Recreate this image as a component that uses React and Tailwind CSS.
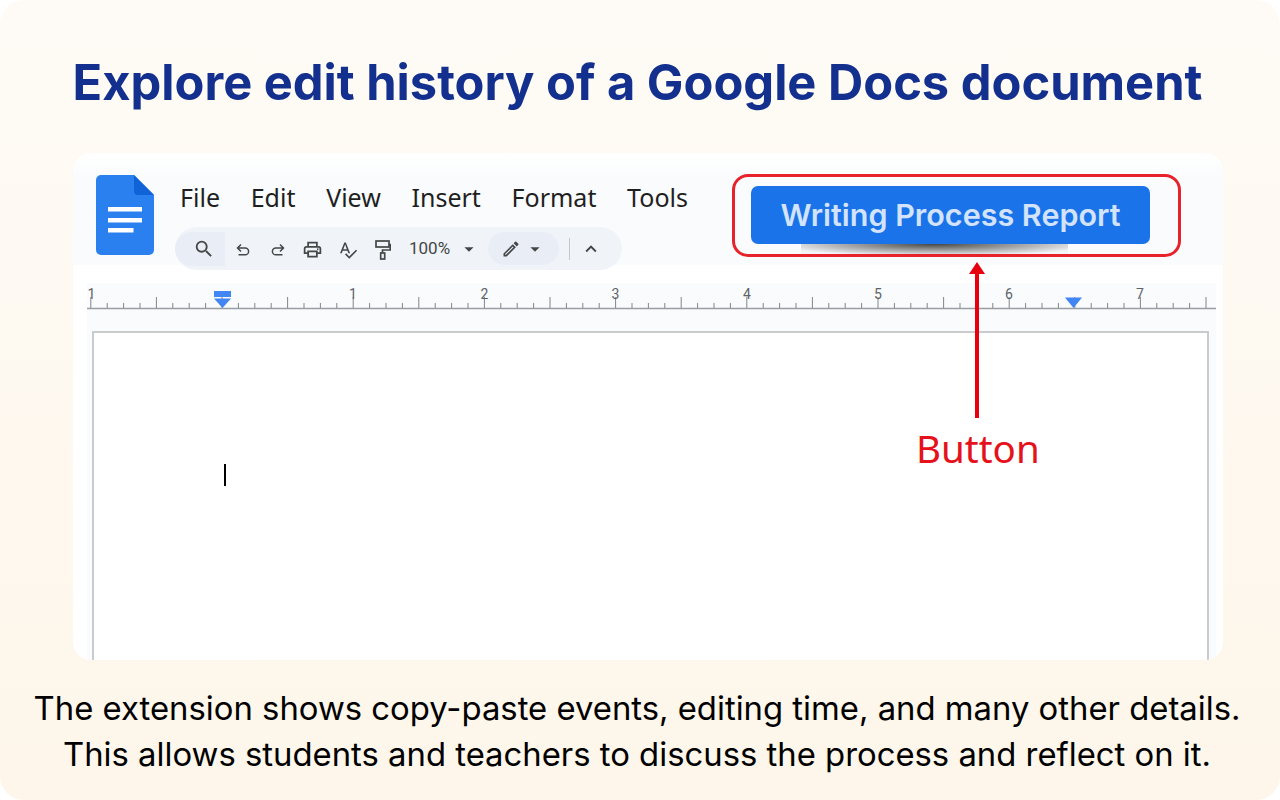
import React from 'react';
import {
  MdSearch,
  MdOutlinePrint,
  MdSpellcheck,
  MdArrowDropDown,
  MdOutlineEdit,
  MdExpandLess,
} from 'react-icons/md';

const MENU = ['File', 'Edit', 'View', 'Insert', 'Format', 'Tools'];

// Google Docs logo
const DocsLogo = () => (
  <svg width="58" height="80" viewBox="0 0 58 80" className="shrink-0">
    <path d="M5 0H38L58 20V75a5 5 0 0 1-5 5H5a5 5 0 0 1-5-5V5a5 5 0 0 1 5-5z" fill="#2a80ee" />
    <path d="M38 0L58 20H42a4 4 0 0 1-4-4z" fill="#0f63d6" />
    <rect x="12" y="32" width="34" height="4.5" fill="#fff" />
    <rect x="12" y="43" width="34" height="4.5" fill="#fff" />
    <rect x="12" y="53" width="25.5" height="4.5" fill="#fff" />
  </svg>
);

const UndoIcon = ({ flip }) => (
  <svg width="14" height="14" viewBox="0 0 14 14" fill="none" stroke="#444746" strokeWidth="1.5" className={flip ? '-scale-x-100' : ''}>
    <path d="M5 1.5L1.5 5L5 8.5M1.5 5H9.2a3.4 3.4 0 0 1 0 6.8H2.5" />
  </svg>
);

const RollerIcon = () => (
  <svg width="16" height="20" viewBox="0 0 16 20" fill="none" stroke="#444746" strokeWidth="1.7">
    <rect x="1" y="1" width="13" height="6" />
    <path d="M14 4.5h1.2V10H7.5v3" />
    <rect x="5.7" y="13" width="4" height="6" />
  </svg>
);

// Regle: un pouce = 131.2px, zero a x=135 dans le svg
const Ruler = () => {
  const ticks = [];
  for (let i = -8; i <= 60; i++) {
    const x = 135 + i * 16.4;
    const tall = i % 4 === 0;
    ticks.push(
      <line key={i} x1={x} x2={x} y1={tall ? 14 : 20} y2="25" stroke="#80868b" strokeWidth="1" />
    );
  }
  const labels = [
    [4.5, '1'],
    [266, '1'],
    [397.5, '2'],
    [528.5, '3'],
    [660, '4'],
    [791, '5'],
    [922, '6'],
    [1053, '7'],
  ];
  return (
    <svg width="1129" height="30" viewBox="0 0 1129 30" className="block">
      <line x1="0" x2="1129" y1="25.5" y2="25.5" stroke="#9a9ea3" strokeWidth="1.5" />
      {ticks}
      {labels.map(([x, t], i) => (
        <text key={i} x={x} y="16" textAnchor="middle" fontSize="14" fill="#5f6368" fontFamily="Roboto, sans-serif">
          {t}
        </text>
      ))}
      <rect x="127" y="8" width="17" height="6" fill="#4285f4" />
      <path d="M127 15.5H144L135.5 25z" fill="#4285f4" />
      <path d="M978 14.5H995L986.5 25z" fill="#4285f4" />
    </svg>
  );
};

const Slot = ({ children }) => (
  <div className="flex h-[24px] w-[35px] items-center justify-center">{children}</div>
);

const Toolbar = () => (
  <div className="ml-[8px] mt-[6px] flex h-[43px] w-[447px] items-center rounded-full bg-[#f0f4f9] text-[#444746]">
    <div className="flex h-[34px] w-[50px] items-center justify-center rounded-l-[18px] bg-[#e9eef6] pl-[8px]">
      <MdSearch size={22} />
    </div>
    <div className="flex items-center pt-[2px]">
      <Slot><UndoIcon /></Slot>
      <Slot><UndoIcon flip /></Slot>
      <Slot><MdOutlinePrint size={21} /></Slot>
      <Slot><MdSpellcheck size={20} /></Slot>
      <Slot><RollerIcon /></Slot>
    </div>
    <span className="ml-[9px] font-['Roboto',sans-serif] text-[17px]">100%</span>
    <MdArrowDropDown size={22} className="ml-[8px]" />
    <div className="ml-[8px] flex h-[33px] w-[71px] items-center justify-center rounded-full bg-[#e9eef6]">
      <MdOutlineEdit size={20} />
      <MdArrowDropDown size={22} className="ml-[3px]" />
    </div>
    <div className="ml-[10px] h-[22px] w-px bg-[#c7c7c7]" />
    <MdExpandLess size={22} className="ml-[10px]" />
  </div>
);

const ReportButton = () => (
  <div className="relative">
    <div className="flex h-[58px] w-[399px] items-center justify-center rounded-[7px] bg-[#1a73e8] font-['Inter',sans-serif] text-[30.5px] font-semibold text-[#d3e3fd]">
      Writing Process Report
    </div>
    <div className="absolute left-[50px] top-[58px] h-[11px] w-[267px] bg-[radial-gradient(ellipse_60%_110%_at_50%_0%,rgba(50,50,50,0.9),rgba(50,50,50,0.03))]" />
  </div>
);

export default function App() {
  return (
    <div className="h-[800px] w-[1280px] bg-white">
      <div className="flex h-full w-full flex-col rounded-[24px] bg-gradient-to-b from-[#fefbf6] to-[#fef6ea] font-['Inter',sans-serif]">
        <h1 className="flex h-[153px] items-center justify-center pr-[5px] pt-[13px] text-[48.8px] font-bold text-[#14308f]">
          Explore edit history of a Google Docs document
        </h1>

        <div className="relative ml-[73px] flex h-[507px] w-[1150px] flex-col overflow-hidden rounded-[18px] bg-white">
          <div className="flex h-[112px] bg-gradient-to-b from-[#ffffff] to-[#fafbfd] to-[25%] pl-[23px] pt-[22px]">
            <DocsLogo />
            <div className="ml-[13px]">
              <div className="flex h-[46px] items-center gap-[30.7px] pl-[13px] font-['Noto_Sans',sans-serif] text-[25px] text-[#1f1f1f]">
                {MENU.map((m) => (
                  <span key={m}>{m}</span>
                ))}
              </div>
              <Toolbar />
            </div>
            <div className="ml-auto mr-[73px] mt-[11px]">
              <ReportButton />
            </div>
          </div>

          <div className="mx-[14px] mt-[18px] flex min-h-0 w-[1129px] flex-1 flex-col bg-[#f9fbfd]">
            <Ruler />
            <div className="ml-[5px] mt-[18px] w-[1117px] flex-1 border-2 border-b-0 border-[#c9cbce] bg-white pl-[130px] pt-[131px]">
              <div className="h-[22px] w-[2px] bg-black" />
            </div>
          </div>

          {/* annotation rouge */}
          <div className="absolute left-[659px] top-[21px] h-[83px] w-[449px] rounded-[16px] border-[3px] border-[#e8222a]" />
          <svg width="20" height="156" viewBox="0 0 20 156" className="absolute left-[894px] top-[109px]">
            <path d="M10 0L18 12H12V156H8V12H2z" fill="#e8000f" />
          </svg>
          <span className="absolute left-[843px] top-[270px] font-['Noto_Sans',sans-serif] text-[38.5px] leading-[50px] text-[#e5111b]">
            Button
          </span>
        </div>

        <p className="mt-[25px] pr-[6px] text-center text-[32.85px] leading-[46px] text-black">
          The extension shows copy-paste events, editing time, and many other details.
          <br />
          This allows students and teachers to discuss the process and reflect on it.
        </p>
      </div>
    </div>
  );
}
